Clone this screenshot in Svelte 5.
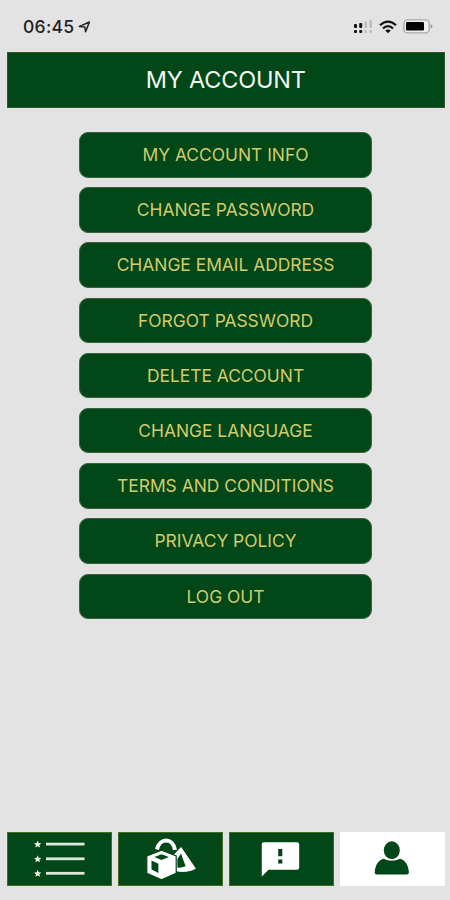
<script>
  const options = [
    "MY ACCOUNT INFO",
    "CHANGE PASSWORD",
    "CHANGE EMAIL ADDRESS",
    "FORGOT PASSWORD",
    "DELETE ACCOUNT",
    "CHANGE LANGUAGE",
    "TERMS AND CONDITIONS",
    "PRIVACY POLICY",
    "LOG OUT",
  ];

  const tabs = ["list", "shapes", "feedback", "account"];

  let active = $state("account");
</script>

<div class="screen">
  <div class="status">
    <span class="time">06:45</span>
    <svg class="location" width="13" height="12" viewBox="0 0 13 12">
      <path d="M1.2 5.6 11.4 1 7.6 10.8 6.8 5.9Z" fill="none" stroke="#222" stroke-width="1.5" stroke-linejoin="round" />
    </svg>
    <svg class="signal" width="20" height="16" viewBox="0 0 20 16">
      <g fill="#111">
        <rect x="1" y="5" width="3" height="4" rx="1" />
        <rect x="6.2" y="4" width="3" height="5" rx="1" />
        <rect x="1" y="11" width="3" height="3" rx="1" />
        <rect x="6.2" y="11" width="3" height="3" rx="1" />
      </g>
      <g fill="#bcbcbc">
        <rect x="11.4" y="2.5" width="2.6" height="6.5" rx="1" />
        <rect x="16.4" y="1" width="2.6" height="8" rx="1" />
        <rect x="11.4" y="11" width="2.6" height="3" rx="1" />
        <rect x="16.4" y="11" width="2.6" height="3" rx="1" />
      </g>
    </svg>
    <svg class="wifi" width="18" height="14" viewBox="0 0 18 14">
      <g fill="none" stroke="#111" stroke-width="2.2">
        <path d="M1 5.2Q9-2 17 5.2" />
        <path d="M4 8.4Q9 3.8 14 8.4" />
      </g>
      <path d="M9 13.2 6.2 10.6Q9 8.4 11.8 10.6Z" fill="#111" />
    </svg>
    <svg class="battery" width="30" height="15" viewBox="0 0 30 15">
      <rect x=".9" y=".9" width="25.4" height="13" rx="3.6" fill="#eee" stroke="#a9a9a9" stroke-width="1.4" />
      <rect x="3" y="3" width="18" height="8.6" rx="1.3" fill="#000" />
      <path d="M27.7 5Q29.4 6 29.4 7.3T27.7 9.8Z" fill="#999" />
    </svg>
  </div>

  <h1>MY ACCOUNT</h1>

  <div class="options">
    {#each options as option}
      <button class="option">{option}</button>
    {/each}
  </div>

  <nav>
    {#each tabs as tab}
      <button class="tab" class:active={active === tab} aria-label={tab} onclick={() => (active = tab)}>
        <svg width="60" height="48" viewBox="0 0 60 48">
          {#if tab === "list"}
            {#each [9.2, 23.9, 38.4] as y}
              <path
                transform="translate(8.7 {y})"
                d="M0-3.6 1-1.2 3.6-1 1.7.8 2.3 3.4 0 2-2.3 3.4-1.7.8-3.6-1-1-1.2Z"
                fill="#e8f5e6" />
              <rect x="17" y={y - 1.5} width="38.5" height="2.8" fill="#dce9da" />
            {/each}
          {:else if tab === "shapes"}
            <path d="M17 14.5C19.5 2.6 33 2.4 35 15" fill="none" stroke="#fff" stroke-width="4" />
            <path d="M41 12.5 55.3 33.5Q48 37.5 37 36L34 20Z" fill="#fff" stroke="#fff" stroke-linejoin="round" />
            <path d="M41 18.5 45.6 31.2Q42 33 37.4 32.6V24Z" fill="#014718" />
            <path d="M21.5 15.2 36.2 21V38.3L21.5 44.8 6.8 38.3V21Z" fill="#fff" stroke="#014718" stroke-width="1.2" />
            <path d="M21.5 19.2 28.8 22.1 21.5 25 14.4 22.1Z" fill="#014718" />
            <path d="M11.5 25.6 18.4 28.8V38L11.5 34.6Z" fill="#014718" />
          {:else if tab === "feedback"}
            <path d="M12.6 7.2H46Q48.2 7.2 48.2 9.4V32.5Q48.2 34.8 46 34.8H17.5L10.8 41.5V9Q10.8 7.2 12.6 7.2Z" fill="#fff" />
            <path d="M27.2 14H31.3V21.3H27.2ZM27.2 24.6H31.3V28.5H27.2Z" fill="#073d1b" />
          {:else}
            <ellipse cx="29.8" cy="15.2" rx="8" ry="8.9" fill="#014718" />
            <path
              d="M21.5 23.8Q29.8 27.6 38.1 23.8C43.5 25 46.6 31 46.9 37.4Q46.9 39.4 44.8 39.4H14.8Q12.7 39.4 12.7 37.4C13 31 16.1 25 21.5 23.8Z"
              fill="#014718" />
          {/if}
        </svg>
      </button>
    {/each}
  </nav>
</div>

<style>
  :global(body) {
    background: #e3e3e3;
  }

  .screen {
    display: flex;
    flex-direction: column;
    box-sizing: border-box;
    width: 450px;
    height: 900px;
    padding: 0 5.5px 14px 7px;
    font-family: Inter, "Liberation Sans", sans-serif;
    background: #e3e3e3;
  }

  .status {
    display: flex;
    align-items: center;
    height: 51.5px;
    padding: 2px 12px 0 16px;
    box-sizing: border-box;
  }

  .time {
    width: 53px;
    font-size: 17.5px;
    font-weight: 500;
    letter-spacing: 0.3px;
    color: #222;
  }

  .location {
    margin-left: 2px;
  }

  .signal {
    margin-left: auto;
  }

  .wifi {
    margin-left: 6px;
  }

  .battery {
    margin-left: 6px;
  }

  h1 {
    display: flex;
    align-items: center;
    justify-content: center;
    box-sizing: border-box;
    height: 56.5px;
    margin: 0;
    border: 1px solid #2c5a25;
    font-size: 23.5px;
    font-weight: 400;
    letter-spacing: -0.2px;
    color: #f4f8f2;
    background: #014718;
  }

  .options {
    display: flex;
    flex-direction: column;
    gap: 9.7px;
    width: 293px;
    margin: 24px 0 0 72px;
  }

  .option {
    height: 45.5px;
    padding: 0 0 0.4px;
    border: 1px solid #3c6440;
    border-radius: 9px;
    font-family: inherit;
    font-size: 17.4px;
    letter-spacing: 0;
    color: #d3cb6c;
    background: #014718;
  }

  nav {
    display: grid;
    grid-template-columns: repeat(4, 1fr);
    gap: 6.5px;
    height: 54px;
    margin-top: auto;
  }

  .tab {
    display: flex;
    align-items: center;
    justify-content: center;
    padding: 0;
    border: 1.5px solid #416c22;
    background: #014718;
  }

  .tab.active {
    border-color: #fff;
    background: #fff;
  }
</style>
